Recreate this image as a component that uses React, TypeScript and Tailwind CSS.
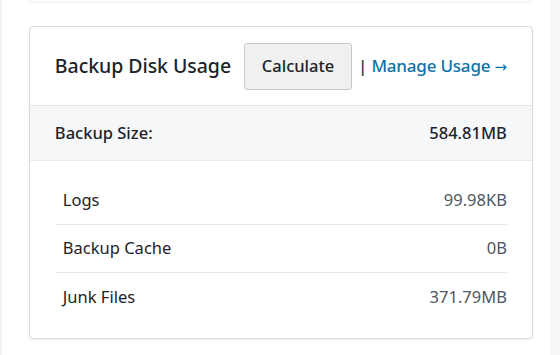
const rows = [
  { label: "Logs", value: "99.98KB" },
  { label: "Backup Cache", value: "0B" },
  { label: "Junk Files", value: "371.79MB" },
];

export default function App() {
  return (
    <div
      className="flex h-[355px] w-[560px] overflow-hidden bg-white text-[#1d2327]"
      style={{ fontFamily: '"Noto Sans", "Open Sans", sans-serif' }}
    >
      <div className="w-[2px] bg-[#f3f3f3]" />
      <div className="flex-1">
        {/* card above, scrolled mostly out of view */}
        <div className="-mt-[20px] ml-[27px] mr-[17px] h-[21px] rounded-b bg-white shadow-[0_1px_3px_rgba(0,0,0,0.08)]" />

        <div className="ml-[27px] mr-[17px] mt-[25px] overflow-hidden rounded border border-[#dcdcde] bg-white shadow-[0_1px_2px_rgba(0,0,0,0.08)]">
          <div className="flex h-[79px] items-center border-b border-[#e2e4e7] px-[25px]">
            <h2 className="shrink-0 whitespace-nowrap text-[19.5px] font-medium leading-none tracking-[-0.05px]">
              Backup Disk Usage
            </h2>
            <button className="ml-[13px] h-[47px] w-[108px] shrink-0 rounded-[3px] border border-[#c9c9c9] bg-[#f0f0f0] text-[16.5px] font-medium text-[#1d2327]">
              Calculate
            </button>
            <span className="ml-[6px] text-[17px] font-medium text-[#1d2b3c]">|</span>
            <a href="#" className="ml-[4px] whitespace-nowrap text-[17px] font-medium tracking-[-0.2px] text-[#0b72aa]">
              Manage Usage <span style={{ fontFamily: '"DejaVu Sans", sans-serif' }} className="text-[15px]">→</span>
            </a>
          </div>

          <div className="flex h-[55px] items-center justify-between border-b border-[#e8eaec] bg-[#f6f7f8] px-[25px] text-[16.5px] font-medium">
            <span>Backup Size:</span>
            <span>584.81MB</span>
          </div>

          <div className="px-[25px] pb-[17px] pt-[16px]">
            {rows.map((r, i) => (
              <div
                key={r.label}
                className={`flex h-[48px] items-center justify-between pl-[8px] text-[16.5px] ${
                  i < rows.length - 1 ? "border-b border-[#e8e8e8]" : ""
                }`}
              >
                <span className="text-[#1d2327]">{r.label}</span>
                <span className="text-[#50575e]">{r.value}</span>
              </div>
            ))}
          </div>
        </div>
      </div>
      <div className="w-[11px] bg-[#f6f6f6]" />
    </div>
  );
}
